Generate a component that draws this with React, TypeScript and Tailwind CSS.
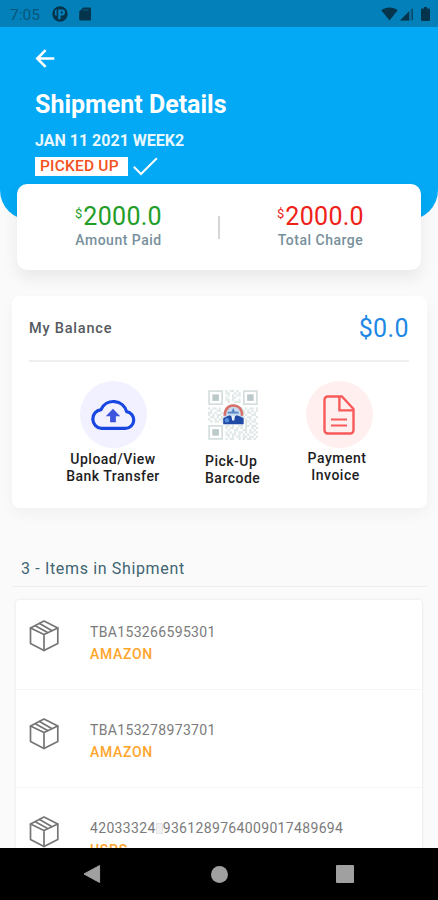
import { ReactNode } from 'react'

const shipments = [
  { tracking: 'TBA153266595301', carrier: 'AMAZON' },
  { tracking: 'TBA153278973701', carrier: 'AMAZON' },
  { tracking: '42033324', rest: '9361289764009017489694', carrier: 'USPS' },
]

// '#' is a filled module, the three finder corners are drawn separately
const qrRows = [
  '........#.##.#.........',
  '........##..#.#........',
  '.........#.#.##........',
  '........#..##..........',
  '........##.#..#........',
  '.........#..###........',
  '.......................',
  '.......................',
  '#.##.#.........#.#.##.#',
  '.#..##.........##.#.#.#',
  '##.#..#.........#.##.#.',
  '#.#.##.........#.#..##.',
  '.##.#.#........##.##..#',
  '#..#.##........#.#.#.#.',
  '.#.##.#........#.##.##.',
  '...............#.#.#..#',
  '........##.#..##.##.##.',
  '........#.##.#.#.#..#.#',
  '.........#..##..##.#.#.',
  '........#.#.#.##.#.##.#',
  '........##.##.#.#.#..#.',
  '.........#.#.##.##.##.#',
  '........#.##..#.#.##.#.',
]

function StatusBar() {
  return (
    <div className="h-[27px] shrink-0 bg-[#0380b9] text-[#04354c] flex items-center justify-between pl-[10px] pr-[8px]">
      <div className="flex items-center">
        <span className="w-[42px] text-[15.5px] leading-5 text-[#08567a] pt-[2px]">7:05</span>
        <svg className="w-[16px] h-[16px]" viewBox="0 0 16 16">
          <circle cx="8" cy="8" r="7.7" fill="currentColor" />
          <path d="M3 4.4L4.6 3.2V10.2L3 9ZM6.2 3.4H10A3 3 0 0 1 10 9.4H8.6V13.2H6.2Z" fill="#0380b9" />
          <path d="M8.8 5.4H9.8A1.1 1.1 0 0 1 9.8 7.6H8.8Z" fill="currentColor" />
        </svg>
        <svg className="w-[12px] h-[14px] ml-[11px]" viewBox="0 0 12 14">
          <path d="M4.3 .5H11A1 1 0 0 1 12 1.5V12.5A1 1 0 0 1 11 13.5H1.2A1 1 0 0 1 .2 12.5V4.6Z" fill="currentColor" />
          <path d="M4.8 2V4M6.8 2V4M8.8 2V4" stroke="#056a97" strokeWidth=".8" />
        </svg>
      </div>
      <div className="flex items-center">
        <svg className="w-[17px] h-[14px]" viewBox="0 0 17 14">
          <path d="M.3 3.3C5 -.4 12-.4 16.7 3.3L8.5 13.6Z" fill="currentColor" />
        </svg>
        <svg className="w-[13px] h-[14px] ml-[2px]" viewBox="0 0 13 14">
          <path d="M13 .5V13.5H0Z" fill="#0b6a98" />
          <path d="M9 4.5V13.5H0Z" fill="currentColor" />
          <path d="M12.3 2V13" stroke="#04405d" strokeWidth="1" />
        </svg>
        <svg className="w-[9px] h-[14px] ml-[8px]" viewBox="0 0 9 14">
          <path d="M3 0H6V1.4H8A1 1 0 0 1 9 2.4V13A1 1 0 0 1 8 14H1A1 1 0 0 1 0 13V2.4A1 1 0 0 1 1 1.4H3Z" fill="currentColor" />
        </svg>
      </div>
    </div>
  )
}

function Amount({ value, label, className }: { value: string; label: string; className: string }) {
  return (
    <div className="flex flex-col items-center w-[88px]">
      <div className={`flex items-start pl-px leading-7 ${className}`}>
        <span className="mr-px text-[13px] leading-[22px]">$</span>
        <span className="text-[25px] tracking-[0.3px]">{value}</span>
      </div>
      <span className="pl-px text-[14px] leading-[18px] tracking-[0.5px] text-[#78909c] font-medium whitespace-nowrap">{label}</span>
    </div>
  )
}

function Finder({ x, y }: { x: number; y: number }) {
  return (
    <g>
      <rect x={x + 0.5} y={y + 0.5} width="6" height="6" fill="#fff" stroke="#d3dddd" strokeWidth=".75" />
      <rect x={x + 2} y={y + 2} width="3" height="3" fill="#bcc9cb" />
    </g>
  )
}

function QrCode() {
  return (
    <svg className="w-[50px] h-[50px]" viewBox="0 0 23 23">
      {qrRows.map((row, y) =>
        row.split('').map((c, x) => c === '#' && <rect key={`${x}-${y}`} x={x} y={y} width="1" height="1" fill="#dfe6e6" />)
      )}
      <Finder x={0} y={0} />
      <Finder x={16} y={0} />
      <Finder x={0} y={16} />
      <path d="M7.2 15.6V11.2C7.2 8.2 9.2 6.5 11.6 6.5C14.2 6.5 16.2 8.2 16.2 11.2V15.6Z" fill="#c9d9ee" />
      <path d="M7.7 11.8C7.7 8.7 9.4 7.1 11.6 7.1C13.9 7.1 15.7 8.7 15.7 11.8" fill="none" stroke="#d8706a" strokeWidth="1.2" />
      <path d="M11.6 8.2L12.4 10H14.1V10.8H9.1V10H10.8Z" fill="#5587c6" />
      <path d="M7 13L8.6 12.2L10 11.6L11.6 12.6L13.2 11.6L14.8 12.2L16.4 13V15.8H7Z" fill="#1f4aa6" />
      <path d="M10.8 11.8H12.4L12.1 14H11.1Z" fill="#eef3fb" />
      <circle cx="8.7" cy="13.9" r="1" fill="#5690dd" />
    </svg>
  )
}

function Action({ icon, className, children }: { icon: ReactNode; className: string; children: ReactNode }) {
  return (
    <div className={`flex flex-col text-[14px] leading-[17px] font-medium text-[#1e1e1e] whitespace-nowrap ${className}`}>
      {icon}
      {children}
    </div>
  )
}

function BoxIcon() {
  return (
    <svg className="w-[30px] h-[32px]" viewBox="0 0 30 32" fill="none" stroke="#757575" strokeWidth="1.7" strokeLinejoin="round" strokeLinecap="round">
      <path d="M15 1L28.8 8V23.5L15 30.5L1.5 23.5V8Z" />
      <path d="M1.5 8L15 14.6L28.8 8M15 14.6V30.5" />
      <path d="M10.6 3.4L22.6 10.6M6.3 5.8L18.6 12.6" />
    </svg>
  )
}

export default function App() {
  return (
    <div className="w-[438px] h-[900px] overflow-hidden bg-[#fafafa] flex flex-col font-['Roboto',sans-serif]">
      <StatusBar />

      <div className="h-[821px] shrink-0 overflow-hidden">
        <header className="h-[193px] bg-[#03a9f4] rounded-b-[30px] pl-[35px] pt-[22px] text-white">
          <svg className="w-[20px] h-[20px]" viewBox="0 0 20 20" fill="none" stroke="currentColor" strokeWidth="2.6">
            <path d="M19.3 9.5H2.3M10.6 1.2L2.3 9.5L10.6 17.8" />
          </svg>
          <h1 className="mt-[22px] text-[25px] leading-7 font-bold">Shipment Details</h1>
          <p className="mt-[12px] text-[16px] leading-5 font-bold text-[#e8f7fe]">JAN 11 2021 WEEK2</p>
          <div className="mt-[6px] flex items-center">
            <span className="w-[93px] h-[19px] pl-[5px] bg-white text-[#f4511e] text-[15.5px] leading-[19px] tracking-[0.2px] font-medium">PICKED UP</span>
            <svg className="w-[25px] h-[19px] ml-[5px]" viewBox="0 0 25 19" fill="none" stroke="currentColor" strokeWidth="2">
              <path d="M.8 9.7L8 17L23.8 1.2" />
            </svg>
          </div>
        </header>

        <section className="relative mx-[17px] -mt-[36px] h-[86px] bg-white rounded-[10px] shadow-[0_8px_16px_rgba(0,0,0,0.07)] flex items-start pt-[19px] pl-[57px]">
          <Amount value="2000.0" label="Amount Paid" className="text-[#219d28]" />
          <div className="w-[2px] h-[23px] mt-[13px] ml-[56px] mr-[56px] bg-[#d6d6d6]" />
          <Amount value="2000.0" label="Total Charge" className="text-[#ee2218]" />
        </section>

        <section className="ml-[12px] mr-[11px] mt-[26px] h-[212px] bg-white rounded-[8px] shadow-[0_6px_14px_rgba(0,0,0,0.04)] px-[17px]">
          <div className="h-[64px] pt-[2px] flex items-center justify-between">
            <span className="text-[14.5px] tracking-[0.8px] font-medium text-[#565a60]">My Balance</span>
            <span className="mr-px text-[25px] tracking-[0.4px] text-[#1e88e5]">$0.0</span>
          </div>
          <div className="h-[2px] mr-px bg-[#efefef]" />
          <div className="flex items-start pt-[19px]">
            <Action
              className="w-[94px] ml-[37px] items-center text-center tracking-[0.5px]"
              icon={
                <div className="w-[67px] h-[67px] mb-[3px] rounded-full bg-[#f1f1ff] flex items-center justify-center">
                  <svg className="w-[48px] h-[33px]" viewBox="0 0 46 32">
                    <path d="M12 29.5H35A8.2 8.2 0 0 0 36.2 13.2A13.2 13.2 0 0 0 11.4 11.2A9.2 9.2 0 0 0 12 29.5Z" fill="none" stroke="#1747e0" strokeWidth="3.1" strokeLinejoin="round" />
                    <path d="M23 10.5L30 17.7H25.8V23.5H20.2V17.7H16Z" fill="#3d55dc" />
                  </svg>
                </div>
              }
            >
              <p>Upload/View<br />Bank Transfer</p>
            </Action>
            <Action className="w-[60px] ml-[45px] pt-[9px] tracking-[0.5px]" icon={<div className="h-[63px] pl-[3px]"><QrCode /></div>}>
              <p>Pick-Up<br />Barcode</p>
            </Action>
            <Action
              className="w-[68px] ml-[40px] items-center text-center tracking-[0.5px]"
              icon={
                <div className="w-[67px] h-[67px] mb-[2px] rounded-full bg-[#ffefef] flex items-center justify-center">
                  <svg className="w-[32px] h-[40px]" viewBox="0 0 32 40" fill="none" stroke="#f75a5a" strokeWidth="2.4" strokeLinejoin="round">
                    <path d="M4.8 1.5H19L30.5 14V35.2A3.3 3.3 0 0 1 27.2 38.5H4.8A3.3 3.3 0 0 1 1.5 35.2V4.8A3.3 3.3 0 0 1 4.8 1.5Z" />
                    <path d="M16.4 1.8V15.4H30.3" />
                    <path d="M8 24.4H24M8 30.4H24" strokeWidth="2" />
                  </svg>
                </div>
              }
            >
              <p className="mr-[4px]">Payment</p>
              <p className="mr-[7px]">Invoice</p>
            </Action>
          </div>
        </section>

        <h2 className="ml-[12px] mr-[11px] mt-[50px] h-[29px] pl-[9px] text-[16px] leading-[22px] tracking-[0.65px] text-[#3f6472] border-b border-[#eeeeee]">
          3 - Items in Shipment
        </h2>

        <section className="mx-[16px] mt-[13px] bg-white rounded-t-[3px] shadow-[0_0_3px_rgba(0,0,0,0.1)]">
          {shipments.map((s, i) => (
            <div key={s.tracking} className={`pl-[13px] flex items-start border-b border-[#f5f5f5] ${i === 0 ? 'h-[90px] pt-[20px]' : 'h-[98px] pt-[28px]'}`}>
              <BoxIcon />
              <div className="ml-[31px] mt-px text-[14px] leading-[22px] whitespace-nowrap">
                <p className="flex items-center tracking-[0.34px] text-[#7b7b7b]">
                  {s.tracking}
                  {s.rest && <span className="w-[7px] h-[11px] border border-[#e4e4e4] bg-[#f1f1f1]" />}
                  {s.rest}
                </p>
                <p className="text-[#ffa52c] tracking-[0.7px] font-medium">{s.carrier}</p>
              </div>
            </div>
          ))}
        </section>
      </div>

      <nav className="h-[52px] shrink-0 bg-black flex items-center pl-[83px]">
        <svg className="w-[18px] h-[20px]" viewBox="0 0 18 20">
          <path d="M16.6 1.5V18.5L1 10Z" fill="#a0a0a0" stroke="#a0a0a0" strokeLinejoin="round" />
        </svg>
        <div className="w-[17px] h-[17px] ml-[110px] rounded-full bg-[#a0a0a0]" />
        <div className="w-[18px] h-[18px] ml-[108px] rounded-[1px] bg-[#a0a0a0]" />
      </nav>
    </div>
  )
}
